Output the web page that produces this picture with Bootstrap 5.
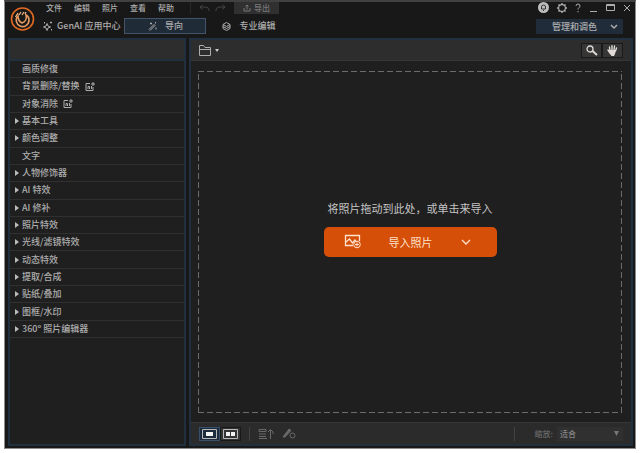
<!DOCTYPE html>
<html lang="zh-CN">
<head>
<meta charset="utf-8">
<meta name="viewport" content="width=device-width, initial-scale=1">
<title>导入照片</title>
<link href="https://cdn.jsdelivr.net/npm/bootstrap@5.3.0/dist/css/bootstrap.min.css" rel="stylesheet">
<style>
body{background:#fff;padding:0 4px 4px;font-family:"Noto Sans CJK SC",sans-serif;font-size:9px;font-weight:500;line-height:12px;color:#adadad;height:100vh}
svg{display:block;fill:none;stroke:currentColor;flex:none}
button,select,a{font:inherit;color:inherit;line-height:12px}
button{background:none;border:0;padding:0}
a{text-decoration:none}
.app-window{background:#181818;border:1px solid #8c8c8c;border-top:2px solid #414141;padding:0 2px 2px 3px;min-height:100%}
.app-head{height:36px;padding-left:2px;padding-right:2px}
.brand{color:#e06a20}
.menus{gap:12px;font-size:8px;padding-left:11px}
.vline{width:1px;background:#292929}
.hist{color:#484848;gap:5px}
.export{background:#303030;color:#777;width:45px;height:12px;font-size:8px;gap:3px}
.tab-on{background:#202b38;border:1px solid #445468;width:82px;height:16px}
.modes{padding-left:8px}
.win-tools{gap:8px;margin-bottom:6px}
.style-btn{background:#202c3a;width:87px;height:15px;gap:13px;padding-right:5px}
.side{width:178px;border:2px solid #20303f;background:#1f1f1f;margin-right:3px}
.side-top{height:21px;background:#2d2d2d;border-bottom:2px solid #20303f}
.tools{display:grid;grid-auto-rows:1fr;min-height:277px;margin:0;padding:0;list-style:none}
.tools li{border-bottom:1px solid #303030;display:flex}
.tools button{display:flex;flex:1;align-items:center;gap:3px;padding-left:4px;text-align:left}
.tools .gen-mark{margin-left:2px}
.tri{width:5px;height:6px;fill:#bbb;stroke:none}
.tri-none{visibility:hidden}
.work{border:2px solid #20303f;background:#1f1f1f;min-width:0}
.bar{height:21px;background:#2d2d2d;border-bottom:1px solid #363636}
.tool-btn{width:21px;height:15px;background:#363636;border:1px solid #191919;display:grid;place-items:center;color:#e0dcd8}
.drop-zone{margin:10px 9px 9px 7px;gap:13px;padding-bottom:26px;font-size:11px;font-weight:400;color:#c4c4c4;
--c:#6c6c6c;--h:repeating-linear-gradient(90deg,var(--c) 0 6px,transparent 6px 9px);--v:repeating-linear-gradient(0deg,var(--c) 0 6px,transparent 6px 9px);
background:var(--h) top/100% 1px no-repeat,var(--h) bottom/100% 1px no-repeat,var(--v) left/1px 100% no-repeat,var(--v) right/1px 100% no-repeat}
.import-btn{background:#d54f08;border-radius:5px;width:173px;height:30px;color:#ffe2cc;padding:0 26px 0 20px}
.foot{height:22px;background:#2b2b2b;border-top:1px solid #363636;padding:0 8px}
.view-btn{width:21px;height:14px;background:#343434;border:1px solid #181818;display:grid;place-items:center;color:#b8b8b8}
.view-on{background:#1b2a3d;border-color:#36506c}
.foot .vline{height:14px;background:#424242}
.foot-dim{color:#696969}
.zoom-wrap{display:grid;width:66px;height:14px;background:#303030;color:#858585}
.zoom-wrap>*{grid-area:1/1}
.zoom-wrap select{appearance:none;background:none;border:0;padding:0 3px;font-size:8px}
.zoom-wrap svg{place-self:center end;margin-right:4px;pointer-events:none}
.zoom-label{font-size:8px}
</style>
<script src="https://cdn.jsdelivr.net/npm/bootstrap@5.3.0/dist/js/bootstrap.bundle.min.js"></script>
</head>
<body>
<div class="app-window d-flex flex-column">
<header class="app-head d-flex">
 <svg class="brand mt-1" width="25" height="26" viewBox="0 0 25 26" aria-hidden="true"><circle cx="12.500" cy="13" r="11" stroke-width="1.600"/><path d="M8 10C5 13 6 18 10 20c4 2 9-1 9-6 0-2-1-4-3-5 1 4-1 7-4 8-2-1-4-4-4-7Z" stroke="#e59a62" stroke-width="1.600"/><path d="M5.500 11 8 7M9 9l2-3M12 9l2-3M15 8l1-2" stroke="#f1b381" stroke-width="1.300"/></svg>
 <div class="d-flex flex-column flex-grow-1">
  <div class="d-flex align-items-center pb-1">
   <nav class="menus d-flex" aria-label="菜单"><a href="#">文件</a><a href="#">编辑</a><a href="#">照片</a><a href="#">查看</a><a href="#">帮助</a></nav>
   <span class="vline align-self-stretch ms-3 me-2"></span>
   <div class="hist d-flex me-2">
    <button aria-label="撤销"><svg width="11" height="8" viewBox="0 0 12 8"><path d="M4 0.500 1 3l3 2.500M1 3h6q4 0 4 4.500"/></svg></button>
    <button aria-label="重做"><svg width="11" height="8" viewBox="0 0 12 8"><path d="m8 .5 3 2.500-3 2.500M11 3H5Q1 3 1 7.500"/></svg></button>
   </div>
   <button class="export d-flex align-items-center justify-content-center"><svg width="8" height="8" viewBox="0 0 8 8"><path d="M1 4v3h6V4M4 5.500V1M2.500 2.500 4 1l1.500 1.500"/></svg>导出</button>
  </div>
  <div class="modes d-flex align-items-center">
   <a href="#" class="d-flex align-items-center gap-1 me-1"><svg width="10" height="10" viewBox="0 0 10 10"><path d="M4 2.500 5 5l2.500 1L5 7 4 9.500 3 7 .5 6 3 5Z"/><path d="M8 .5v2M7 1.500h2M1.500 1v1.500M8.500 8v1.500"/></svg>GenAI 应用中心</a>
   <button class="tab-on d-flex align-items-center justify-content-center gap-2"><svg width="9" height="9" viewBox="0 0 9 9"><path d="m1 7.500 5-5M2 8.500l5-5M6 2.500l1 1M3 .5v2M2 1.500h2M7.500 0v1.500M8 5.500v2"/></svg>导向</button>
   <a href="#" class="d-flex align-items-center gap-2 ms-3"><svg width="9" height="9" viewBox="0 0 9 9"><path d="m4.500.5 3.500 2-3.500 2-3.500-2ZM1 4.500l3.500 2 3.500-2M1 6.500l3.500 2 3.500-2M1 2.500v4M8 2.500v4"/></svg>专业编辑</a>
  </div>
 </div>
 <div class="d-flex flex-column align-items-end">
  <div class="win-tools d-flex align-items-center">
   <button aria-label="账户"><svg width="11" height="11" viewBox="0 0 11 11"><circle cx="5.500" cy="5.500" r="5.500" fill="#bdbdbd" stroke="none"/><path d="M3.500 7V5q0-2 2-2t2 2v2ZM5.500 8v1" stroke="#333"/></svg></button>
   <button aria-label="设置"><svg width="10" height="10" viewBox="0 0 11 11"><circle cx="5.500" cy="5.500" r="3.700" stroke-width="1.200"/><path d="M5.500 0v2M5.500 9v2M0 5.500h2M9 5.500h2M1.600 1.600l1.200 1.200M8.200 8.200l1.200 1.200M9.400 1.600 8.200 2.800M2.800 8.200 1.600 9.400" stroke-width="1.500"/></svg></button>
   <button aria-label="帮助"><svg width="6" height="10" viewBox="0 0 6 10"><path d="M1 3q0-2 2-2t2 2q0 1-1 1.700T3 6.500M3 8v1.300"/></svg></button>
   <button aria-label="最小化"><svg width="9" height="9" viewBox="0 0 9 9"><path d="M1 8.500h7"/></svg></button>
   <button aria-label="最大化"><svg width="9" height="9" viewBox="0 0 9 9"><path d="M.5 1.500h8v6h-8ZM.5 2.500h8"/></svg></button>
   <button aria-label="关闭"><svg width="8" height="8" viewBox="0 0 8 8"><path d="m1 1 6 6M7 1 1 7"/></svg></button>
  </div>
  <button class="style-btn d-flex align-items-center justify-content-end me-2">管理和调色<svg width="8" height="6" viewBox="0 0 8 6"><path d="m1 1 3 3 3-3" stroke-width="1.500"/></svg></button>
 </div>
</header>
<div class="d-flex flex-grow-1">
 <aside class="side flex-shrink-0">
  <div class="side-top"></div>
  <ul class="tools">
   <li><button><svg class="tri tri-none"></svg>画质修復</button></li>
   <li><button><svg class="tri tri-none"></svg>背景删除/替换<svg class="gen-mark" width="10" height="9" viewBox="0 0 10 9"><path d="M5 1.500H1v7h7V5M3 7V4.500h1.500V7M6.500 4v3M8 0v4M6 2h4"/></svg></button></li>
   <li><button><svg class="tri tri-none"></svg>对象消除<svg class="gen-mark" width="10" height="9" viewBox="0 0 10 9"><path d="M5 1.500H1v7h7V5M3 7V4.500h1.500V7M6.500 4v3M8 0v4M6 2h4"/></svg></button></li>
   <li><button><svg class="tri" viewBox="0 0 5 6"><path d="M1 0v6l4-3Z"/></svg>基本工具</button></li>
   <li><button><svg class="tri" viewBox="0 0 5 6"><path d="M1 0v6l4-3Z"/></svg>颜色调整</button></li>
   <li><button><svg class="tri tri-none"></svg>文字</button></li>
   <li><button><svg class="tri" viewBox="0 0 5 6"><path d="M1 0v6l4-3Z"/></svg>人物修饰器</button></li>
   <li><button><svg class="tri" viewBox="0 0 5 6"><path d="M1 0v6l4-3Z"/></svg>AI 特效</button></li>
   <li><button><svg class="tri" viewBox="0 0 5 6"><path d="M1 0v6l4-3Z"/></svg>AI 修补</button></li>
   <li><button><svg class="tri" viewBox="0 0 5 6"><path d="M1 0v6l4-3Z"/></svg>照片特效</button></li>
   <li><button><svg class="tri" viewBox="0 0 5 6"><path d="M1 0v6l4-3Z"/></svg>光线/滤镜特效</button></li>
   <li><button><svg class="tri" viewBox="0 0 5 6"><path d="M1 0v6l4-3Z"/></svg>动态特效</button></li>
   <li><button><svg class="tri" viewBox="0 0 5 6"><path d="M1 0v6l4-3Z"/></svg>提取/合成</button></li>
   <li><button><svg class="tri" viewBox="0 0 5 6"><path d="M1 0v6l4-3Z"/></svg>贴纸/叠加</button></li>
   <li><button><svg class="tri" viewBox="0 0 5 6"><path d="M1 0v6l4-3Z"/></svg>图框/水印</button></li>
   <li><button><svg class="tri" viewBox="0 0 5 6"><path d="M1 0v6l4-3Z"/></svg>360º 照片编辑器</button></li>
  </ul>
 </aside>
 <main class="work d-flex flex-column flex-grow-1">
  <div class="bar d-flex align-items-center justify-content-between px-2">
   <button class="d-flex align-items-center gap-1" aria-label="打开"><svg width="12" height="11" viewBox="0 0 12 11"><path d="M.5 10.500v-10h4l1.500 2h5.500v8ZM.5 4.500h11"/></svg><svg width="4" height="3" viewBox="0 0 4 3"><path d="M0 0h4L2 3Z" fill="#ccc" stroke="none"/></svg></button>
   <div class="d-flex">
    <button class="tool-btn" aria-label="缩放"><svg width="12" height="11" viewBox="0 0 12 11"><circle cx="4" cy="4" r="3" stroke-width="1.300"/><path d="m6.500 6 4.500 4" stroke-width="2"/></svg></button>
    <button class="tool-btn" aria-label="抓手"><svg width="11" height="11" viewBox="0 0 11 11"><path d="M3 6 2.500 2M5 5V.8M7 5l.5-4M8.500 6l1-3M1 5l2 3" stroke-width="1.400" stroke-linecap="round"/><path d="M2.500 5h6.500L8 9 7 11H4.500L3 9Z" fill="#e2dcd8" stroke="none"/></svg></button>
   </div>
  </div>
  <section class="drop-zone d-flex flex-column align-items-center justify-content-center flex-grow-1">
   <div>将照片拖动到此处，或单击来导入</div>
   <button class="import-btn d-flex align-items-center justify-content-between"><svg width="17" height="15" viewBox="0 0 17 15"><path d="M9 11.500H1.500v-10h14V7M2 8l3.500-3 3 4L11 6l1 1" stroke-width="1.300"/><circle cx="13" cy="10.500" r="3.300"/><path d="M11 10.500h4M13 8.500v4"/></svg><span>导入照片</span><svg width="10" height="6" viewBox="0 0 10 6"><path d="m1 1 4 4 4-4" stroke-width="1.300"/></svg></button>
  </section>
  <footer class="foot d-flex align-items-center justify-content-between foot-dim">
   <div class="d-flex align-items-center gap-1">
    <div class="d-flex me-1"><button class="view-btn view-on" aria-label="单张视图"><svg width="15" height="10" viewBox="0 0 15 10"><path d="M.5.5h14v9H.5Z"/><path d="M4 3h7v4H4Z" fill="#f2f2f2" stroke="none"/></svg></button><button class="view-btn" aria-label="对比视图"><svg width="15" height="10" viewBox="0 0 15 10"><path d="M.5.5h14v9H.5Z"/><path d="M3 3h4v4H3ZM8 3h4v4H8Z" fill="#f2f2f2" stroke="none"/></svg></button></div>
    <span class="vline me-1"></span>
    <button class="me-1" aria-label="历史"><svg width="16" height="12" viewBox="0 0 16 12"><path d="M1 1.500h7v2H1ZM1 6h7M1 8.500h7M1 10.500h8M12.500 11V2M10 4l2.500-2.500L15 4v2"/></svg></button>
    <button aria-label="编辑标记"><svg width="15" height="11" viewBox="0 0 15 11"><path d="m1 9 6-8 2 1.500-6 6.500Z" fill="currentColor"/><circle cx="10.500" cy="7.500" r="2.500"/></svg></button>
   </div>
   <div class="d-flex align-items-center gap-1"><span class="vline me-3"></span><label class="zoom-label" for="zoom">缩放:</label>
    <div class="zoom-wrap"><select id="zoom"><option>适合</option></select><svg width="5" height="5" viewBox="0 0 5 5"><path d="M0 0h5L2.500 5Z" fill="#777" stroke="none"/></svg></div></div>
  </footer>
 </main>
</div>
</div>
</body>
</html>
